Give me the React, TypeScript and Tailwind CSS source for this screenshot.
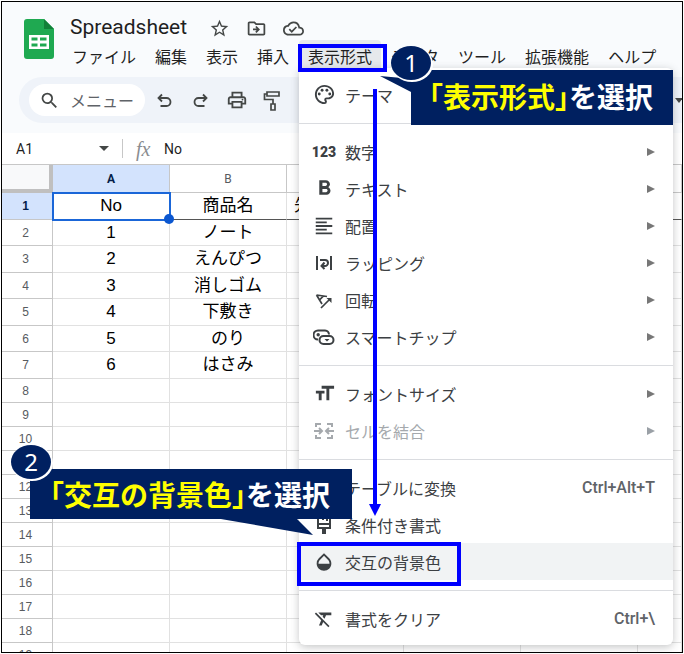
import { Fragment, type ReactNode } from "react";
import {
  MdFormatAlignLeft,
  MdFormatBold,
  MdFormatClear,
  MdFormatSize,
  MdOpacity,
  MdOutlineCloudDone,
  MdOutlineDriveFileMove,
  MdOutlinePalette,
  MdOutlinePrint,
  MdOutlineStarBorder,
  MdSearch,
} from "react-icons/md";

interface FormatItem {
  label: string;
  icon: ReactNode;
  submenu?: boolean;
  shortcut?: string;
  disabled?: boolean;
  active?: boolean;
}

const menus = ["ファイル", "編集", "表示", "挿入", "表示形式", "データ", "ツール", "拡張機能", "ヘルプ"];

const columns = ["A", "B", "C", "D", "E", "F"];

const cells: Record<number, string[]> = {
  1: ["No", "商品名", "先"],
  2: ["1", "ノート"],
  3: ["2", "えんぴつ"],
  4: ["3", "消しゴム"],
  5: ["4", "下敷き"],
  6: ["5", "のり"],
  7: ["6", "はさみ"],
};

const rows = Array.from({ length: 19 }, (_, i) => i + 1);

function rowHeight(row: number) {
  if (row > 7) return "h-6";
  return row % 2 ? "h-[27px]" : "h-[26px]";
}

function WrapIcon() {
  return (
    <svg width="20" height="20" viewBox="0 0 20 20" fill="none" stroke="currentColor" strokeWidth="2">
      <path d="M3 3v14M17 3v14M6 7h5a2.700 2.700 0 0 1 0 6H8M10.500 9.500 7.500 13l3 3" />
    </svg>
  );
}

function RotateIcon() {
  return (
    <svg width="20" height="20" viewBox="0 0 20 20" fill="none" stroke="currentColor" strokeWidth="1.700">
      <path d="M2.500 5 13 6.500M2.500 5l5.500 9M9.500 5.800 5 10.500M7 18 16 9" />
      <path d="M12.500 8h5v5z" fill="currentColor" stroke="none" />
    </svg>
  );
}

function ChipIcon() {
  return (
    <svg width="22" height="18" viewBox="0 0 22 18" fill="none" stroke="currentColor" strokeWidth="2">
      <path d="M5 11.500a4.500 4.500 0 0 1 0-9h7a4.300 4.300 0 0 1 4 4" />
      <rect x="6.500" y="8" width="14" height="8" rx="4" />
      <circle cx="5.200" cy="6.800" r="1.700" fill="currentColor" stroke="none" />
      <path d="M11.500 11h5l-2.500 2.500z" fill="currentColor" stroke="none" />
    </svg>
  );
}

function MergeIcon() {
  return (
    <svg width="20" height="20" viewBox="0 0 20 20" fill="none" stroke="currentColor" strokeWidth="2">
      <path d="M2 6V3h5M13 3h5v3M2 14v3h5M13 17h5v-3M0 10h8M5 7l3 3-3 3M20 10h-8M15 7l-3 3 3 3" />
    </svg>
  );
}

function TableIcon() {
  return (
    <svg width="18" height="18" viewBox="0 0 18 18" fill="none" stroke="currentColor" strokeWidth="2">
      <path d="M2 2h14v14H2zM2 7h14M9 7v9" />
    </svg>
  );
}

function BrushIcon() {
  return (
    <svg width="18" height="20" viewBox="0 0 18 20" fill="none" stroke="currentColor" strokeWidth="2">
      <path d="M3 2h12v11H3zM3 9h12M8 2v3M12 2v4" />
      <path d="M7 13h4v6H7z" fill="currentColor" stroke="none" />
    </svg>
  );
}

function RollerIcon() {
  return (
    <svg width="18" height="22" viewBox="0 0 18 22" fill="none" stroke="currentColor" strokeWidth="1.700">
      <path d="M4 3h12v4H4zM4 5H1.500v5.500H10V15M8 15h4v6H8z" />
    </svg>
  );
}

function UndoIcon({ flip }: { flip?: boolean }) {
  return (
    <svg
      width="21"
      height="20"
      viewBox="0 0 21 20"
      fill="none"
      stroke="currentColor"
      strokeWidth="1.800"
      className={flip ? "-scale-x-100" : ""}
    >
      <path d="M8 4.500 4.500 8 8 11.500M4.500 8h8a4 4 0 0 1 0 8H6.500" />
    </svg>
  );
}

function SheetsLogo() {
  return (
    <svg width="30" height="40" viewBox="0 0 30 40">
      <path d="M3 0h17l10 10v27a3 3 0 0 1-3 3H3a3 3 0 0 1-3-3V3a3 3 0 0 1 3-3z" fill="#1fa951" />
      <path d="M20 0l10 10H20z" fill="#128039" />
      <path
        d="M5 16h20v14H5zM7.500 18.500v3h6v-3zM16 18.500v3h6.500v-3zM7.500 24.500v3h6v-3zM16 24.500v3h6.500v-3z"
        fill="#fff"
        fillRule="evenodd"
      />
    </svg>
  );
}

const groups: FormatItem[][] = [
  [{ label: "テーマ", icon: <MdOutlinePalette size={23} /> }],
  [
    {
      label: "数字",
      icon: <span className="font-['Roboto',sans-serif] text-sm font-black">123</span>,
      submenu: true,
    },
    { label: "テキスト", icon: <MdFormatBold size={25} />, submenu: true },
    { label: "配置", icon: <MdFormatAlignLeft size={22} />, submenu: true },
    { label: "ラッピング", icon: <WrapIcon />, submenu: true },
    { label: "回転", icon: <RotateIcon />, submenu: true },
    { label: "スマートチップ", icon: <ChipIcon />, submenu: true },
  ],
  [
    { label: "フォントサイズ", icon: <MdFormatSize size={23} />, submenu: true },
    { label: "セルを結合", icon: <MergeIcon />, submenu: true, disabled: true },
  ],
  [
    { label: "テーブルに変換", icon: <TableIcon />, shortcut: "Ctrl+Alt+T" },
    { label: "条件付き書式", icon: <BrushIcon /> },
    { label: "交互の背景色", icon: <MdOpacity size={22} />, active: true },
  ],
  [{ label: "書式をクリア", icon: <MdFormatClear size={22} />, shortcut: "Ctrl+\\" }],
];

function Header() {
  return (
    <header className="bg-[#f9fbfd] pb-[10px]">
      <div className="flex gap-4 pl-[22px] pt-[17px]">
        <SheetsLogo />
        <div className="-mt-[3px] min-w-0">
          <div className="flex h-6 items-center gap-4 text-[#444746]">
            <h1 className="mr-[6px] font-['Roboto',sans-serif] text-[21px] text-[#1f1f1f]">Spreadsheet</h1>
            <button aria-label="スター"><MdOutlineStarBorder size={21} /></button>
            <button aria-label="移動"><MdOutlineDriveFileMove size={21} /></button>
            <button aria-label="保存済み"><MdOutlineCloudDone size={21} /></button>
          </div>
          <nav className="flex h-8 items-center gap-px whitespace-nowrap">
            {menus.map((name) => (
              <button
                key={name}
                className={`h-8 px-[9px] first:pl-[2px] ${name === "表示形式" ? "rounded bg-[#e6e9ec]" : ""}`}
              >
                {name}
              </button>
            ))}
          </nav>
        </div>
      </div>
      <div className="ml-[17px] mt-[5px] flex h-[46px] items-center rounded-l-full bg-[#eff3f9] pl-[10px] text-[#444746]">
        <label className="flex h-8 w-[116px] items-center gap-[10px] rounded-full bg-white pl-[10px]">
          <MdSearch size={21} />
          <input
            aria-label="メニュー"
            placeholder="メニュー"
            className="w-[72px] bg-transparent outline-none placeholder:text-[#5f6368]"
          />
        </label>
        <div className="flex items-center gap-[15px] pl-[9px]">
          <button aria-label="元に戻す"><UndoIcon /></button>
          <button aria-label="やり直し"><UndoIcon flip /></button>
          <button aria-label="印刷"><MdOutlinePrint size={22} /></button>
          <button aria-label="書式の貼り付け"><RollerIcon /></button>
        </div>
        <span className="-mr-px ml-auto size-0 border-x-4 border-t-[5px] border-x-transparent border-t-[#444746]" />
      </div>
    </header>
  );
}

function FormulaBar() {
  return (
    <div className="flex h-8 items-center border-b border-[#c7c7c7] pl-[14px] font-['Roboto',sans-serif] text-sm text-[#1f1f1f]">
      <span className="w-[83px]">A1</span>
      <span className="size-0 border-x-[5px] border-t-[5px] border-x-transparent border-t-[#444746]" />
      <span className="ml-[13px] h-[19px] w-px bg-[#c7c7c7]" />
      <span className="ml-[13px] w-[28px] font-['Liberation_Serif',serif] text-xl italic text-[#8a8d91]">fx</span>
      <span>No</span>
    </div>
  );
}

function cellBorder(row: number, col: number) {
  if (row !== 1) return "border-[#e1e1e1] text-center";
  if (col === 0) return "border-b-[#555] border-r-[#e1e1e1] text-center outline-2 -outline-offset-1 outline-[#1a66d8]";
  if (col === 2) return "border-b-[#555] border-r-[#e1e1e1] pl-[7px] text-left";
  return "border-b-[#555] border-r-[#e1e1e1] text-center";
}

function Grid() {
  return (
    <table className="w-full table-fixed border-separate border-spacing-0">
      <colgroup>
        <col className="w-[51px]" />
        {columns.map((name, i) => (
          <col key={name} className={i < 5 ? "w-[117px]" : ""} />
        ))}
      </colgroup>
      <thead>
        <tr className="h-7 font-['Roboto',sans-serif] text-xs text-[#575b5f]">
          <td className="border-b-4 border-r-4 border-[#c0c0c0] bg-[#f8f9fa]" />
          {columns.map((name) => (
            <th
              key={name}
              className={`border-b border-r border-[#c7c7c7] ${name === "A" ? "bg-[#d3e3fd] font-bold text-[#041e49]" : "font-normal"}`}
            >
              {name}
            </th>
          ))}
        </tr>
      </thead>
      <tbody>
        {rows.map((row) => (
          <tr key={row} className={rowHeight(row)}>
            <th
              className={`border-b border-r border-[#c7c7c7] py-0 pl-0 pr-[3px] font-['Liberation_Sans',sans-serif] text-xs leading-4 ${row === 1 ? "bg-[#d3e3fd] font-bold text-[#041e49]" : "font-normal text-[#575b5f]"}`}
            >
              {row}
            </th>
            {columns.map((name, i) => (
              <td
                key={name}
                className={`overflow-hidden whitespace-nowrap border-b border-r p-0 font-['Liberation_Sans','Noto_Sans_CJK_JP',sans-serif] text-[17px] leading-5 text-black ${cellBorder(row, i)}`}
              >
                {cells[row]?.[i]}
              </td>
            ))}
          </tr>
        ))}
      </tbody>
    </table>
  );
}

function FormatMenu() {
  return (
    <div className="absolute left-[299px] right-[11px] top-[68px] rounded-md bg-white py-2 text-[#3c4043] shadow-[0_2px_8px_rgba(60,64,67,0.3)]">
      {groups.map((items, g) => (
        <Fragment key={g}>
          {g > 0 && <hr className="mb-[9px] mt-[10px] border-[#dadce0]" />}
          {items.map((item) => (
            <button
              key={item.label}
              disabled={item.disabled}
              className={`flex h-[37px] w-full items-center pr-[18px] text-left ${item.disabled ? "text-[#a5a9ad]" : ""} ${item.active ? "bg-[#f1f3f4]" : ""}`}
            >
              <span className="ml-[10px] flex w-[30px] justify-center">{item.icon}</span>
              <span className="ml-[6px]">{item.label}</span>
              {item.shortcut && (
                <span className="ml-auto font-['Roboto',sans-serif] font-medium text-[#5f6368]">{item.shortcut}</span>
              )}
              {item.submenu && (
                <span
                  className={`ml-auto size-0 border-y-4 border-l-8 border-y-transparent ${item.disabled ? "border-l-[#9aa0a6]" : "border-l-[#777]"}`}
                />
              )}
            </button>
          ))}
        </Fragment>
      ))}
    </div>
  );
}

function Callout({ className, target }: { className: string; target: string }) {
  return (
    <div
      className={`absolute flex items-center whitespace-nowrap bg-[#002060] text-[28px] font-bold leading-8 text-white [font-feature-settings:'halt'] ${className}`}
    >
      <span className="text-[#ffff00]">「{target}」</span>を選択
    </div>
  );
}

function Badge({ className, n }: { className: string; n: number }) {
  return (
    <div
      className={`absolute flex h-[34px] w-10 items-center justify-center rounded-[50%] bg-[#002060] font-['Noto_Sans',sans-serif] text-2xl text-white shadow-[1px_1px_0_1px_#fff] ${className}`}
    >
      {n}
    </div>
  );
}

export default function App() {
  return (
    <div className="relative h-screen overflow-hidden bg-white p-px font-['Noto_Sans_CJK_JP',sans-serif] text-base text-[#1f1f1f]">
      <div className="h-full overflow-hidden border border-black">
        <Header />
        <FormulaBar />
        <Grid />
      </div>

      <span className="absolute left-[164px] top-[214px] size-[10px] rounded-full bg-[#0b57d0]" />
      <FormatMenu />

      {/* guide annotations */}
      <div className="absolute left-[298px] top-[44px] h-7 w-[89px] border-4 border-[#0000ff]" />
      <div className="absolute left-[297px] top-[542px] h-11 w-[164px] border-4 border-[#0000ff]" />
      <svg className="pointer-events-none absolute left-0 top-0" width="684" height="654" viewBox="0 0 684 654">
        <path d="M373 89h4v415h4l-6 12-6-12h4z" fill="#0000ff" />
        <path d="M380 76l33 3v14zM215 518l98 17-17-17z" fill="#002060" />
      </svg>
      <Callout className="left-[411px] top-[70px] h-[55px] pl-[18px] pr-5 pb-1" target="表示形式" />
      <Callout className="left-[30px] top-[469px] h-[50px] pl-5 pr-[22px] pb-px" target="交互の背景色" />
      <Badge className="left-[391px] top-[46px]" n={1} />
      <Badge className="left-[11px] top-[445px]" n={2} />
    </div>
  );
}
